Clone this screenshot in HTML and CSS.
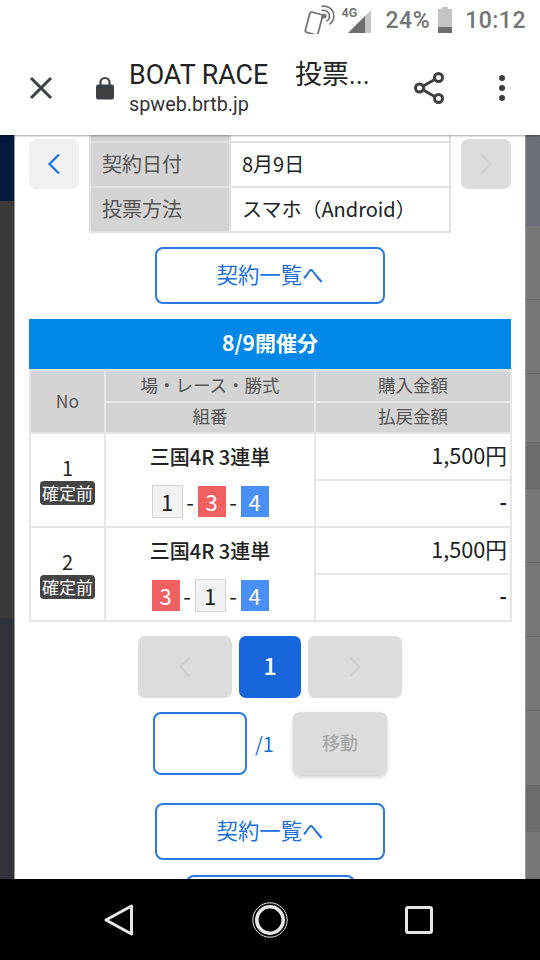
FILE: index.html
```html
<!DOCTYPE html>
<html>
<head>
    <meta name="viewport" content="width=device-width, initial-scale=1.0">
    <title>BOAT RACE 投票</title>
    <link rel="stylesheet" href="styles.css">
</head>
<body>
    <div class="phone">
        <div class="top">
            <div class="statusbar">
                <svg class="st-nfc" width="32" height="30" viewBox="0 0 32 30">
                    <rect x="3.5" y="9" width="13" height="21" rx="2" transform="rotate(15 10 19)" fill="none" stroke="#757575" stroke-width="1.8"/>
                    <circle cx="20" cy="12" r="2.6" fill="#757575"/>
                    <path d="M17.5 6.6a6 6 0 0 1 8 5.4 6 6 0 0 1-3 5.2" fill="none" stroke="#757575" stroke-width="1.6"/>
                    <path d="M17.5 2.4a10 10 0 0 1 12.4 9.6 10 10 0 0 1-4.6 8.4" fill="none" stroke="#757575" stroke-width="1.6"/>
                </svg>
                <div class="st-signal">
                    <span class="st-4g">4G</span>
                    <svg width="24" height="24" viewBox="0 0 24 24">
                        <path d="M0 23 L23 0 V23 Z" fill="#c4c4c4"/>
                        <path d="M0 23 L17 6 V23 Z" fill="#6e6e6e"/>
                    </svg>
                </div>
                <span class="st-pct">24%</span>
                <svg class="st-batt" width="16" height="26" viewBox="0 0 16 26">
                    <path d="M5 0h6v2h4v24H1V2h4z" fill="#c4c4c4"/>
                    <rect x="1" y="20" width="14" height="6" fill="#6e6e6e"/>
                </svg>
                <span class="st-time">10:12</span>
            </div>
            <div class="toolbar">
                <svg class="tb-close" width="24" height="24" viewBox="0 0 24 24">
                    <path d="M2 2 L22 22 M22 2 L2 22" stroke="#3c4043" stroke-width="3" fill="none"/>
                </svg>
                <svg class="tb-lock" width="18" height="24" viewBox="0 0 18 24">
                    <path d="M4.5 9V6.5a4.5 4.5 0 0 1 9 0V9" fill="none" stroke="#3c4043" stroke-width="2.2"/>
                    <rect x="0" y="8.5" width="18" height="15" rx="2.2" fill="#3c4043"/>
                </svg>
                <div class="tb-title">
                    <div class="tb-name">BOAT RACE　投票...</div>
                    <div class="tb-url">spweb.brtb.jp</div>
                </div>
                <svg class="tb-share" width="32" height="34" viewBox="0 0 32 34">
                    <path d="M7 17 L25 6.5 M7 17 L25 27.5" stroke="#3c4043" stroke-width="2.8" fill="none"/>
                    <circle cx="6.5" cy="17" r="4" fill="#fff" stroke="#3c4043" stroke-width="3"/>
                    <circle cx="25.5" cy="6.5" r="4" fill="#fff" stroke="#3c4043" stroke-width="3"/>
                    <circle cx="25.5" cy="27.5" r="4" fill="#fff" stroke="#3c4043" stroke-width="3"/>
                </svg>
                <div class="tb-menu"><i></i><i></i><i></i></div>
            </div>
        </div>

        <div class="middle">
            <div class="strip-left">
                <div class="sl-navy"></div>
                <div class="sl-grey"></div>
                <div class="sl-slate"></div>
            </div>
            <div class="sheet">
                <div class="info-row">
                    <div class="side-btn prev">
                        <svg width="14" height="22" viewBox="0 0 14 22"><path d="M12 1.5 L2.5 11 L12 20.5" fill="none" stroke="#1a73e8" stroke-width="2.2"/></svg>
                    </div>
                    <table class="info-table">
                        <tr class="cut-row"><th></th><td></td></tr>
                        <tr><th>契約日付</th><td>8月9日</td></tr>
                        <tr><th>投票方法</th><td>スマホ（Android）</td></tr>
                    </table>
                    <div class="side-btn next">
                        <svg width="14" height="22" viewBox="0 0 14 22"><path d="M2 1.5 L11.5 11 L2 20.5" fill="none" stroke="#d2d2d2" stroke-width="2"/></svg>
                    </div>
                </div>

                <div class="list-btn first">契約一覧へ</div>

                <div class="day-head">8/9開催分</div>
                <table class="result-table">
                    <colgroup><col class="c-no"><col class="c-race"><col class="c-money"></colgroup>
                    <tr class="head-row">
                        <th rowspan="2">No</th>
                        <th>場・レース・勝式</th>
                        <th>購入金額</th>
                    </tr>
                    <tr class="head-row">
                        <th>組番</th>
                        <th>払戻金額</th>
                    </tr>
                    <tr class="data-row">
                        <td rowspan="2" class="no-cell"><div>1</div><span class="badge">確定前</span></td>
                        <td rowspan="2" class="race-cell">
                            <div class="race-name">三国4R 3連単</div>
                            <div class="tiles"><span class="tile white">1</span><span class="dash">-</span><span class="tile red">3</span><span class="dash">-</span><span class="tile blue">4</span></div>
                        </td>
                        <td class="money">1,500円</td>
                    </tr>
                    <tr class="data-row"><td class="money none">-</td></tr>
                    <tr class="data-row">
                        <td rowspan="2" class="no-cell"><div>2</div><span class="badge">確定前</span></td>
                        <td rowspan="2" class="race-cell">
                            <div class="race-name">三国4R 3連単</div>
                            <div class="tiles"><span class="tile red">3</span><span class="dash">-</span><span class="tile white">1</span><span class="dash">-</span><span class="tile blue">4</span></div>
                        </td>
                        <td class="money">1,500円</td>
                    </tr>
                    <tr class="data-row"><td class="money none">-</td></tr>
                </table>

                <div class="pager">
                    <div class="pg-btn">
                        <svg width="14" height="22" viewBox="0 0 14 22"><path d="M12 1.5 L2.5 11 L12 20.5" fill="none" stroke="#d0d0d0" stroke-width="2"/></svg>
                    </div>
                    <div class="pg-num">1</div>
                    <div class="pg-btn">
                        <svg width="14" height="22" viewBox="0 0 14 22"><path d="M2 1.5 L11.5 11 L2 20.5" fill="none" stroke="#d0d0d0" stroke-width="2"/></svg>
                    </div>
                </div>

                <div class="jump">
                    <div class="jump-input"></div>
                    <span class="jump-total">/1</span>
                    <div class="jump-btn">移動</div>
                </div>

                <div class="list-btn second">契約一覧へ</div>
                <div class="clipped-btn"></div>
            </div>
            <div class="strip-right">
                <div class="sr-slate"></div>
                <div class="sr-band h74"></div>
                <div class="sr-band h74"></div>
                <div class="sr-band h69"></div>
                <div class="sr-band dark h46"></div>
                <div class="sr-band h74"></div>
                <div class="sr-band h74"></div>
                <div class="sr-band h74"></div>
                <div class="sr-band h75"></div>
                <div class="sr-band dark h46"></div>
                <div class="sr-band h47"></div>
            </div>
        </div>

        <div class="navbar">
            <svg width="30" height="32" viewBox="0 0 30 32">
                <path d="M27.5 2 L2 16 L27.5 30 Z" fill="none" stroke="#e6e6e6" stroke-width="3" stroke-linejoin="round"/>
            </svg>
            <svg width="36" height="36" viewBox="0 0 36 36">
                <circle cx="18" cy="18" r="17.2" fill="none" stroke="#e6e6e6" stroke-width="1"/>
                <circle cx="18" cy="18" r="13.2" fill="none" stroke="#e6e6e6" stroke-width="3.6"/>
            </svg>
            <svg width="28" height="28" viewBox="0 0 28 28">
                <rect x="1.5" y="1.5" width="25" height="25" rx="1.5" fill="none" stroke="#e6e6e6" stroke-width="3"/>
            </svg>
        </div>
    </div>
</body>
</html>
```

FILE: styles.css
```css
* {
    box-sizing: border-box;
}
body {
    margin: 0;
    font-family: "Noto Sans CJK JP", "Noto Sans", Roboto, sans-serif;
    color: #222;
}
.phone {
    width: 540px;
    height: 960px;
    display: flex;
    flex-direction: column;
    overflow: hidden;
}

/* status bar + browser toolbar */
.top {
    height: 135px;
    background: #fff;
    position: relative;
    z-index: 2;
    box-shadow: 0 1px 2px rgba(0, 0, 0, 0.35);
    font-family: Roboto, "Noto Sans CJK JP", sans-serif;
}
.statusbar {
    height: 40px;
    display: flex;
    align-items: center;
    padding-right: 14px;
    justify-content: flex-end;
    color: #757575;
}
.st-nfc {
    margin-right: 6px;
    margin-top: -3px;
}
.st-signal {
    position: relative;
    width: 30px;
    height: 26px;
    display: flex;
    justify-content: flex-end;
    align-items: flex-end;
    margin-right: 14px;
    margin-top: 2px;
}
.st-4g {
    position: absolute;
    left: 0;
    top: -2px;
    font-size: 12.5px;
    font-weight: 700;
    line-height: 14px;
}
.st-pct {
    font-size: 23px;
    font-weight: 500;
    letter-spacing: 0.5px;
    margin-right: 7px;
}
.st-batt {
    margin-right: 12px;
}
.st-time {
    font-size: 23px;
    font-weight: 500;
    letter-spacing: 0.5px;
}
.toolbar {
    height: 95px;
    display: flex;
    align-items: center;
    position: relative;
}
.tb-close {
    margin-left: 29px;
}
.tb-lock {
    margin-left: 43px;
}
.tb-title {
    margin-left: 15px;
    width: 285px;
    padding-top: 3px;
}
.tb-name {
    font-size: 26.8px;
    line-height: 32px;
    color: #222;
    white-space: nowrap;
}
.tb-url {
    font-size: 19.8px;
    line-height: 28px;
    color: #333;
}
.tb-share {
    margin-left: -1px;
}
.tb-menu {
    margin-left: 54px;
    display: flex;
    flex-direction: column;
    gap: 4px;
}
.tb-menu i {
    display: block;
    width: 6px;
    height: 6px;
    border-radius: 50%;
    background: #3c4043;
}

/* page area */
.middle {
    height: 744px;
    display: flex;
    overflow: hidden;
}
.strip-left, .strip-right {
    width: 14px;
    display: flex;
    flex-direction: column;
}
.sl-navy {
    height: 66px;
    background: #031a3a;
}
.sl-grey {
    height: 417px;
    background: #3a3a3a;
}
.sl-slate {
    flex: 1;
    background: #30343a;
}
.sr-slate {
    height: 91px;
    background: #6a6e75;
}
.sr-band {
    background: #767676;
    border-bottom: 1px solid #686868;
}
.sr-band.dark {
    background: #6c6c6c;
}
.h46 { height: 46px; }
.h47 { height: 47px; }
.h69 { height: 69px; }
.h74 { height: 74px; }
.h75 { height: 75px; }

.sheet {
    width: 512px;
    background: #fff;
    border-left: 1px solid #999;
    border-right: 1px solid #999;
    padding: 0 14px;
    overflow: hidden;
}
.info-row {
    display: flex;
    align-items: flex-start;
    justify-content: space-between;
}
.side-btn {
    width: 50px;
    height: 50px;
    margin-top: 4px;
    border-radius: 7px;
    display: flex;
    align-items: center;
    justify-content: center;
}
.side-btn.prev {
    background: #f0f0f0;
}
.side-btn.next {
    background: #dcdcdc;
}
.info-table {
    width: 362px;
    border-collapse: collapse;
    table-layout: fixed;
    font-size: 20px;
}
.info-table th, .info-table td {
    border: 2px solid #e2e2e2;
    height: 45px;
    padding: 0 0 3px 11px;
    text-align: left;
    font-weight: 400;
}
.info-table th {
    width: 140px;
    background: #d4d4d4;
    color: #555;
}
.info-table .cut-row th, .info-table .cut-row td {
    height: 7px;
    padding: 0;
    border-top: 0;
}
.list-btn {
    width: 230px;
    height: 57px;
    margin: 0 auto;
    border: 2px solid #2a78e0;
    border-radius: 8px;
    background: #fff;
    color: #1a6fdd;
    font-size: 21.4px;
    padding-bottom: 4px;
    display: flex;
    align-items: center;
    justify-content: center;
}
.list-btn.first {
    margin-top: 14px;
}
.list-btn.second {
    margin-top: 28px;
}
.clipped-btn {
    width: 169px;
    height: 40px;
    margin: 15px auto 0;
    border: 2px solid #2a78e0;
    border-radius: 8px;
}
.day-head {
    height: 50px;
    margin-top: 15px;
    padding-bottom: 5px;
    background: #0087e8;
    color: #fff;
    font-size: 21px;
    font-weight: 700;
    display: flex;
    align-items: center;
    justify-content: center;
}
.result-table {
    width: 481px;
    border-collapse: collapse;
    table-layout: fixed;
}
.c-no { width: 75px; }
.c-race { width: 210px; }
.c-money { width: 196px; }
.result-table th, .result-table td {
    border: 2px solid #e6e6e6;
    padding: 0;
    text-align: center;
    font-weight: 400;
}
.head-row th {
    background: #d4d4d4;
    color: #555;
    font-size: 17.5px;
    height: 31.5px;
    padding-bottom: 3px;
}
.data-row td {
    height: 47px;
}
.no-cell {
    font-size: 20px;
    line-height: 24px;
}
.badge {
    display: inline-block;
    width: 55px;
    height: 24px;
    margin-top: 1px;
    background: #444;
    border-radius: 4px;
    color: #fff;
    font-size: 17px;
    line-height: 23px;
    vertical-align: top;
}
.race-name {
    font-size: 20px;
    line-height: 28px;
    font-weight: 500;
}
.tiles {
    margin-top: 14px;
    height: 33px;
    display: flex;
    align-items: center;
    justify-content: center;
    font-size: 22px;
}
.tile {
    display: flex;
    align-items: center;
    justify-content: center;
    width: 28px;
    height: 31px;
    color: #fff;
}
.tile.white {
    width: 31px;
    height: 33px;
    background: #f2f2f2;
    border: 1px solid #d4d4d4;
    color: #222;
}
.tile.red {
    background: #f26161;
}
.tile.blue {
    background: #4a8ff5;
}
.dash {
    width: 15px;
    text-align: center;
}
.result-table td.money {
    text-align: right;
    padding: 0 3px 3px 0;
    font-size: 21.7px;
    line-height: 30px;
}
.result-table td.none {
    font-weight: 700;
    font-size: 20px;
}
.pager {
    margin-top: 14px;
    display: flex;
    justify-content: center;
    gap: 7px;
}
.pg-btn {
    width: 94px;
    height: 62px;
    background: #dcdcdc;
    border-radius: 7px;
    display: flex;
    align-items: center;
    justify-content: center;
}
.pg-num {
    width: 62px;
    height: 62px;
    padding-bottom: 4px;
    background: #1766db;
    border-radius: 7px;
    color: #fff;
    font-size: 23px;
    font-weight: 500;
    display: flex;
    align-items: center;
    justify-content: center;
}
.jump {
    margin-top: 14px;
    display: flex;
    justify-content: center;
    align-items: center;
}
.jump-input {
    width: 94px;
    height: 63px;
    border: 2px solid #2a78e0;
    border-radius: 8px;
}
.jump-total {
    width: 46px;
    padding-left: 8px;
    color: #1a6fdd;
    font-size: 20px;
}
.jump-btn {
    width: 94px;
    height: 63px;
    padding-bottom: 3px;
    background: #dcdcdc;
    border-radius: 7px;
    box-shadow: 0 2px 4px rgba(0, 0, 0, 0.2);
    color: #a9a9a9;
    font-size: 18px;
    font-weight: 500;
    display: flex;
    align-items: center;
    justify-content: center;
}

/* android nav */
.navbar {
    height: 81px;
    background: #000;
    display: flex;
    align-items: center;
    position: relative;
    z-index: 2;
    padding: 0 107px 0 104px;
    justify-content: space-between;
}
```
